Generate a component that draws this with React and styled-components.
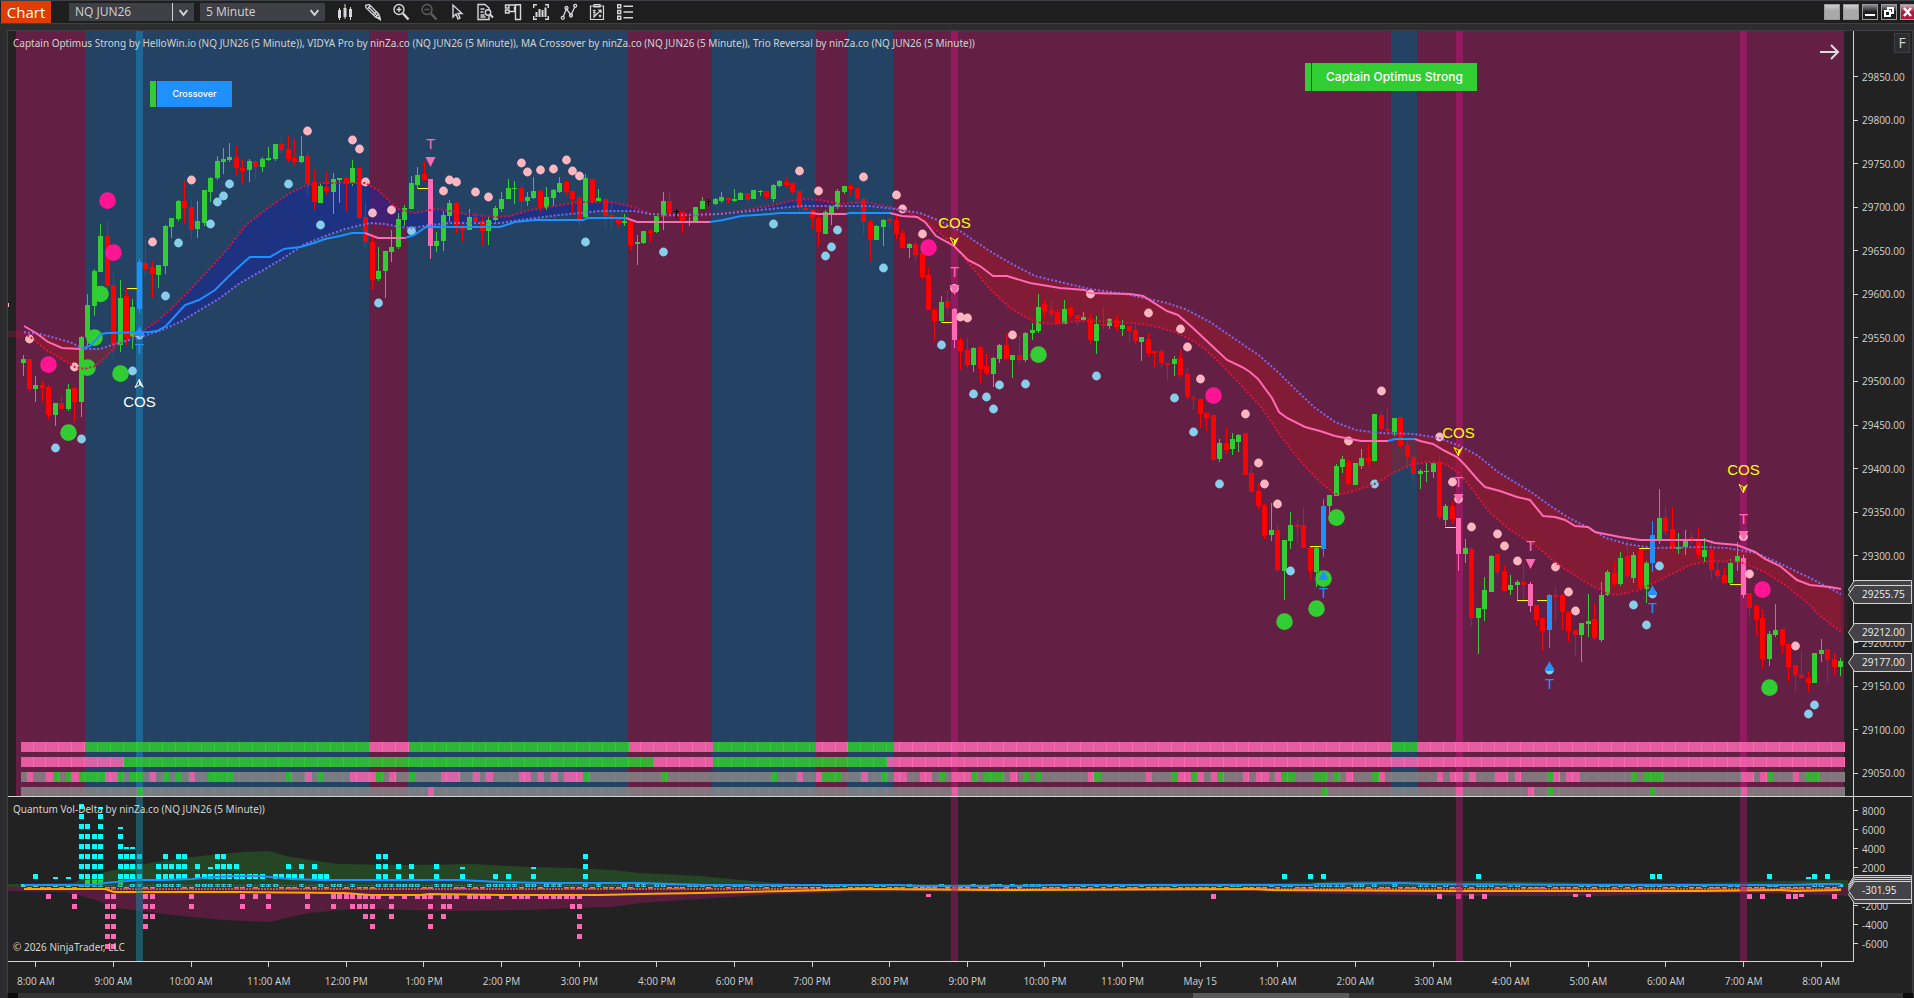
import React from "react";
import styled, { createGlobalStyle } from "styled-components";

const GlobalStyle = createGlobalStyle`
  * { box-sizing: border-box; }
  body { margin: 0; background: #2d2d30; overflow: hidden; }
`;

const FONT = `"Open Sans", "Noto Sans", sans-serif`;

/* ---------- data ---------- */

// One bar per five minutes. Each block lists its bars as
// colour + high,bodyTop,bodyBottom,low in thirds of a unit below `top`.
const BLOCKS = [
  {
    first: 0, top: 120,
    bars: `g705,717,728,768 r717,717,807,819 g768,795,807,846 r783,795,804,846 r795,801,885,897 g849,849,885,918 r825,849,867,867
g792,807,867,873 r801,804,846,906 g648,651,846,891 g522,555,651,678 g447,453,558,588 g312,348,456,456 r303,348,498,510 r459,495,675,714
g480,534,675,696 r505,528,651,675 g537,561,651,687 B417,426,567,579 r348,429,447,468 r426,441,462,534 g435,435,465,504 g315,318,438,462
g294,294,321,354 g240,243,297,303 r183,243,264,309 r240,261,330,357 g243,303,327,354 g210,210,309,318 g171,174,216,246 g108,123,174,180
g84,117,126,162 g69,111,121,126 r78,111,144,165 r117,144,153,189 g117,123,150,186 r120,123,141,177 g111,117,141,156 g81,114,120,123
g72,72,117,123 r54,72,90,102 r48,87,117,126 r57,114,126,138 g48,108,126,129 r93,108,192,225 r150,186,246,270 g192,198,249,249
r153,201,213,225 g159,177,216,282 g174,174,180,249 r171,174,189,273 g120,144,189,198 r144,144,294,297 r246,291,366,387 r339,366,480,507
g381,453,477,483 g393,393,453,534 g330,381,396,426 g279,297,381,387 g255,264,300,318 g168,189,267,267 g141,165,195,207 r126,162,180,183
P177,177,378,417 g336,363,378,396 g273,285,363,393 g240,249,288,306 r246,249,318,339 r303,318,330,366 g267,291,330,330 r276,291,306,327`,
    dots: `p1:657 p8:741 p20:366 p26:180 p44:33 p51:60 p52:87 p53:186 p54:279 p57:270 p65:213 p66:180 p67:186 p70:216
b5:984 b9:957 b17:753 b18:645 b22:528 b24:369 b29:312 b30:246 b31:228 b32:192 b41:192 b46:315 b55:549 b60:333
G7:938 G10:743 G11:653 G12:522 G15:761 M4:734 M13:242 M14:398`,
  },
  {
    first: 71, top: 120,
    bars: `r291,303,333,378 g291,300,333,375 g258,264,300,303 g216,237,267,276 g177,204,237,237 g183,204,207,252 r189,204,246,279
g216,231,243,258 g171,213,234,237 r210,213,264,273 g201,231,264,270 g207,210,234,258 g171,189,216,219 r180,186,216,228 r213,213,237,279
r228,234,297,318 g162,174,291,300 r177,177,246,252 g207,234,243,243 r234,237,288,321 r252,285,291,330 r291,294,309,321 g282,303,309,318
r300,303,375,393 g345,366,372,435 g333,333,369,372 r327,333,339,363 g288,288,336,339 g216,243,288,330 r216,243,279,288 k267,273,276,294
r276,276,303,339 g291,303,306,318 g261,261,303,303 g231,243,267,267 k237,244,247,258 g234,237,252,255 g216,231,243,249 r231,234,240,249
g207,237,243,246 g216,219,240,240 r216,219,240,246 g210,210,237,237 g210,213,216,228 r213,213,231,240 g192,195,237,246 g180,183,198,201
r174,186,195,201 r189,189,216,222 r213,213,264,276 r249,264,270,276 r270,270,294,327 r273,294,336,378 g270,276,342,342 g258,258,279,315
g207,213,261,267 g198,198,216,222 r192,198,207,225 r204,204,237,252 r231,237,306,342 r297,306,360,426 g315,318,360,360 g297,300,321,378
r294,297,303,327 r288,300,342,357 r327,339,384,387 g369,372,384,414 r363,372,405,423`,
    dots: `p72:231 p77:129 p78:156 p80:150 p82:147 p84:120 p85:153 p86:168 p120:153 p123:213 p130:171 p135:225 p136:267
b87:366 b99:396 b116:312 b124:408 b125:381 b126:330 b133:444`,
  },
  {
    first: 139, top: 160,
    bars: `r279,279,351,357 r324,345,450,450 r444,450,483,543 g408,426,483,489 r390,423,444,462 P444,447,540,564 r531,540,573,630
r534,570,615,624 g561,564,615,636 r558,561,627,669 r579,618,639,645 g591,594,642,681 g552,555,597,609 r519,555,597,600 g585,585,600,654
r528,585,600,612 g516,519,600,606 g489,510,519,540 g402,441,513,519 r420,432,453,474 r423,450,462,471 r447,456,492,498 g420,447,492,492
r438,444,465,477 r465,465,477,498 g456,471,480,486 r462,477,540,552 g468,492,543,582 r441,492,498,507 g474,477,498,507 r468,480,501,513
g480,495,507,528 r498,498,513,549 r498,510,543,552 g531,531,546,603 r519,537,579,591 r573,573,579,624 r567,573,609,624 r609,609,615,663
g588,597,612,648 r567,594,645,654 r621,642,711,720 r705,714,717,750 r717,717,762,804 r756,759,774,813 r765,765,900,903 g837,849,897,906
r804,849,870,882 g819,837,867,885 g822,825,846,876 r819,819,945,945 r915,939,996,999 r969,993,1038,1050 r1032,1035,1128,1137
g1029,1110,1125,1143 r1092,1110,1230,1236 g1140,1140,1233,1320 g1056,1095,1143,1167 r1077,1095,1101,1149 r1041,1095,1164,1164
r1161,1161,1233,1260 g1161,1164,1236,1281 B1017,1038,1167,1191 g1005,1005,1038,1062 g912,918,1008,1008`,
    dots: `p139:222 p144:385 p145:471 p146:474 p153:525 p165:402 p174:459 p179:507 p180:561 p182:657 p189:762 p191:909 p192:972 p194:1032
b142:555 b147:702 b149:711 b150:747 b151:675 b155:672 b166:648 b178:714 b181:816 b185:972 b196:1233
G157:584 G195:1385 G200:1346 G201:1256 G203:1073 M140:263 M184:707`,
  },
  {
    first: 204, top: 360,
    bars: `g288,297,321,339 r297,303,372,378 g309,309,375,375 g267,294,318,327 r252,294,303,318 g162,162,303,306 r153,165,207,222
r144,207,213,219 g174,174,216,228 r171,171,258,261 r243,255,291,327 r285,291,342,366 g327,333,342,387 g309,333,336,366 g303,309,336,354
r291,306,471,480 g432,438,480,498 r426,438,477,492 P474,474,582,633 g537,564,582,609 r561,567,774,798 g744,744,774,882 g651,690,747,783
g585,588,696,696 r582,582,636,645 r618,633,693,693 g645,675,690,705 g660,666,675,720 r612,666,675,720 P666,672,738,756 r735,735,780,798
r774,774,813,873 B702,705,810,864 r681,705,711,786 r702,705,756,810 r756,756,813,843 r810,810,825,888 g789,789,825,906 g702,783,792,831
r729,777,834,840 g666,705,840,846 g630,636,705,708 r606,639,672,681 g576,594,672,678 r540,588,648,654 g576,585,654,669 r567,570,684,690
g603,609,687,729 B483,525,609,636 g387,474,540,552 r438,471,513,525 r441,507,567,567 g519,561,567,582 g510,540,561,585 r516,531,540,552
r504,540,585,597 g534,570,591,606 r540,570,630,657 r603,630,648,657 r624,645,669,672 g597,609,669,672 g546,588,606,633 P585,594,705,714
r699,699,744,771 r732,738,780,828 r750,774,897,927 g813,822,897,918 g732,810,825,831 r807,807,855,879 r849,852,921,963 r915,915,945,996
r870,945,954,954 r936,954,969,996 g879,879,969,969 g837,870,882,906 r867,867,900,969 r879,897,921,948 g894,903,921,948`,
    dots: `p205:243 p210:93 p219:231 p221:366 p222:417 p224:501 p228:522 p229:558 p231:603 p237:621 p239:696 p240:753 p266:530 p267:642 p274:858
b209:372 b249:735 b251:795 b252:702 b253:618 b236:930 b276:1062 b277:1035 G270:983 M269:689`,
  },
];

const BAR_COLORS = { g: "#32cd32", r: "#ff0000", B: "#1e90ff", P: "#ff69b4", k: "#000000" };
const DOT_COLORS = { p: "#ffb6c1", b: "#87ceeb", G: "#32cd32", M: "#ff1493" };
const barX = (i) => Math.floor(23 + 6.468 * i);

const BARS = BLOCKS.flatMap(({ first, top, bars }) =>
  bars.split(/\s+/).map((token, n) => {
    const [high, bodyTop, bodyBottom, low] = token.slice(1).split(",").map((v) => Math.round(top + v / 3));
    return { x: barX(first + n), kind: token[0], high, bodyTop, bodyBottom, low };
  })
);

const DOTS = BLOCKS.flatMap(({ top, dots }) =>
  dots.split(/\s+/).map((token) => {
    const [i, y] = token.slice(1).split(":").map(Number);
    return { x: barX(i) + 0.5, y: top + y / 3, kind: token[0], r: /[GM]/.test(token[0]) ? 8.3 : 4.4 };
  })
);

const points = (text) => text.trim().split(/\s+/).map((p) => p.split(",").map(Number));

const SLOW = points(`24,332 40,334 70,342 85,349 100,349 115,344 140,337 162,330 182,321 200,310 220,298 240,283 265,269 285,257
305,244 325,236 345,229 370,223 385,224 400,227 412,228 430,225 450,223 500,223 520,220 560,215 590,212 600,211 635,211 650,214
680,215 720,214 750,211 780,208 800,206 840,206 870,206 895,209 920,213 940,221 960,231 988,250 1010,263 1035,276 1060,282
1090,289 1125,294 1167,303 1185,309 1210,322 1235,339 1260,356 1280,374 1293,387 1314,407 1335,422 1356,430 1381,433 1414,434
1439,438 1460,446 1477,455 1498,472 1531,492 1552,507 1569,518 1589,528 1606,538 1627,544 1652,548 1702,547 1727,548 1756,553
1777,562 1810,578 1841,594`);

const FAST = points(`24,333 33,339 45,349 60,358 75,367 85,369 95,366 105,358 115,347 125,340 140,333 155,323 170,310 185,295
205,274 225,252 245,226 265,210 290,193 305,186 320,183 365,183 378,190 392,204 400,210 415,213 435,209 450,211 465,214 495,217
510,216 530,210 555,206 580,202 610,202 630,206 645,212 660,216 710,215 740,211 770,206 790,201 805,199 820,200 840,204 865,202
890,207 910,213 925,222 940,233 958,250 975,271 990,289 1010,308 1035,322 1050,324 1080,321 1120,322 1150,325 1175,332 1197,343
1215,358 1240,384 1262,408 1280,435 1300,461 1320,482 1335,494 1343,494 1373,485 1393,473 1410,465 1427,462 1443,463 1458,472
1473,490 1489,512 1510,530 1535,545 1556,563 1585,582 1606,593 1617,595 1639,590 1660,580 1690,565 1710,561 1740,562 1765,572
1785,585 1810,605 1819,615 1841,632`);

const VIDYA = [
  ["#ff69b4", "24,326 36,333 48,342 62,348 81,349"],
  ["#1e90ff", "81,349 90,346 101,334 108,333 149,332 157,331 166,326 185,305 199,300 215,290 228,277 243,263 250,257 270,257 284,249 300,247 314,243 325,239 340,236 352,233 365,233"],
  ["#ff69b4", "365,233 378,238 405,238"],
  ["#1e90ff", "405,238 414,235 426,227 500,227 515,222 535,220 583,220 588,218 626,218"],
  ["#ff69b4", "626,218 637,222 710,222"],
  ["#1e90ff", "710,222 723,220 741,216 770,214 780,213 812,213"],
  ["#ff69b4", "812,213 818,214 846,214"],
  ["#1e90ff", "846,214 850,213 890,213"],
  ["#ff69b4", "890,213 902,216 917,217 925,222 936,236 954,246 968,260 980,266 993,276 1007,276 1030,283 1060,288 1085,290 1090,293 1130,294 1143,296 1167,311 1178,315 1193,328 1210,344 1227,360 1242,367 1250,372 1258,379 1272,398 1279,412 1287,418 1305,427 1320,431 1335,436 1361,441 1388,441"],
  ["#1e90ff", "1388,441 1395,439 1415,439"],
  ["#ff69b4", "1415,439 1420,441 1433,444 1445,451 1457,457 1465,465 1478,480 1485,487 1500,491 1517,497 1530,500 1543,516 1555,517 1565,520 1575,526 1588,527 1595,532 1620,537 1640,540 1705,540 1715,543 1737,545 1755,552 1765,559 1780,566 1797,580 1810,585 1830,587 1841,589"],
];

const valueAt = (line, x) => {
  const n = line.findIndex((p) => p[0] >= x);
  if (n <= 0) return line[0][1];
  const [x0, y0] = line[n - 1];
  const [x1, y1] = line[n];
  return y0 + ((y1 - y0) * (x - x0)) / (x1 - x0);
};

// Splits the space between the two averages at every crossing.
const CLOUDS = (() => {
  const out = [];
  let run = null;
  for (let x = 24; x <= 1841; x += 1) {
    const slow = valueAt(SLOW, x);
    const fast = valueAt(FAST, x);
    const up = fast < slow;
    if (!run || run.up !== up) {
      run = { up, a: [], b: [] };
      out.push(run);
    }
    run.a.push(`${x},${slow.toFixed(1)}`);
    run.b.unshift(`${x},${fast.toFixed(1)}`);
  }
  return out;
})();

const TREND_BANDS = [[85, 369], [408, 628], [712, 816], [848, 893], [1391, 1417]];
const SIGNAL_BARS = [[136, "up"], [951, "down"], [1456, "down"], [1740, "down"]];

const STRIPS = [
  { y: 742, h: 10, cells: "p21-85 g85-369 p369-409 g409-629 p629-713 g713-816 p816-848 g848-894 p894-1392 g1392-1418 p1418-1845" },
  { y: 757, h: 10, cells: "p21-124 g124-654 p654-713 g713-887 p887-1845" },
  {
    y: 772, h: 10, rest: true,
    cells: `p27-33 p46-53 g53-60 g66-72 p72-79 g79-105 p105-118 g118-124 g130-143 p150-156 g163-169 g176-182 p189-195 g208-234
g286-292 p305-312 g318-324 p350-376 g376-383 p389-396 g409-415 p441-460 p473-480 p486-493 p519-531 p538-544 p551-558 p564-583
g583-590 g661-667 g771-777 p797-803 p816-822 g822-842 p861-868 g881-887 p894-907 p920-932 g939-945 p952-971 g971-978 g984-1004
p1010-1017 g1023-1029 g1036-1042 p1088-1094 g1094-1101 p1146-1152 g1172-1178 p1178-1191 g1191-1198 p1198-1204 p1211-1217
g1217-1224 p1243-1249 p1256-1269 p1275-1281 g1282-1295 g1314-1327 g1333-1340 p1346-1353 g1372-1379 p1379-1385 p1437-1443
p1450-1463 p1469-1476 p1495-1508 p1515-1521 g1547-1553 p1553-1560 p1566-1580 g1631-1637 g1643-1663 p1741-1754 p1760-1767
g1767-1773 p1793-1799 g1806-1819`,
  },
  { y: 787, h: 9, rest: true, cells: "g137-143 p428-434 p952-958 g1321-1327 p1456-1463 p1528-1534 g1547-1553 g1650-1656 p1741-1747" },
];
const STRIP_COLORS = { p: "#ff69b4", g: "#32cd32", x: "#888888" };

const fillGaps = (cells) => {
  const out = [];
  let x = 21;
  cells.forEach((c) => {
    if (c.from > x) out.push({ kind: "x", from: x, to: c.from });
    out.push(c);
    x = c.to;
  });
  if (x < 1845) out.push({ kind: "x", from: x, to: 1845 });
  return out;
};

const T_SIGNALS = [
  { i: 63, dir: "down", letter: 149, tri: 157 },
  { i: 144, dir: "down", letter: 277, tri: 285 },
  { i: 222, dir: "down", letter: 487, tri: 494 },
  { i: 233, dir: "down", letter: 551, tri: 559 },
  { i: 266, dir: "down", letter: 524, tri: 531 },
  { i: 18, dir: "up", letter: 354, tri: 326 },
  { i: 201, dir: "up", letter: 598, tri: 570 },
  { i: 236, dir: "up", letter: 689, tri: 661 },
  { i: 252, dir: "up", letter: 613, tri: 585 },
];

const COS_SIGNALS = [
  { i: 18, text: 407, arrow: 379, up: true },
  { i: 144, text: 228, arrow: 237 },
  { i: 222, text: 438, arrow: 447 },
  { i: 266, text: 475, arrow: 484 },
];

const STOP_LINES = [[126, 288], [417, 188], [942, 322], [1310, 546], [1445, 527], [1517, 600], [1537, 600], [1639, 548], [1730, 584]];

const VOLUME_UP = `2:874 5:877 7:877 9:804 10:824 11:834 12:807 15:827 16:847 17:847 18:854 21:864 22:854 23:864 24:854 25:854 27:864
28:874 29:867 30:854 31:854 32:864 33:864 34:874 35:874 36:874 37:874 39:874 40:874 41:864 42:874 43:864 45:864 46:874 47:874
55:854 56:854 58:864 60:864 64:864 68:867 73:874 75:874 79:867 87:854 195:874 199:874 201:874 225:874 252:874 253:874 270:874
276:877 277:874 279:874`;
const VOLUME_DOWN = `4:899 8:909 13:949 14:949 19:929 20:919 26:909 34:909 36:899 38:909 44:909 48:909 49:899 50:899 51:909 52:909
53:919 54:929 55:899 57:919 59:899 61:899 62:899 63:929 65:919 66:909 67:899 69:899 70:899 71:899 72:899 74:899 76:899 77:899
78:899 80:899 81:899 82:899 83:899 84:899 85:909 86:939 88:896 140:897 184:899 219:899 222:899 224:899 226:899 240:897 242:897 267:899
269:899 273:899 274:899 275:897 280:899`;
const pairs = (text) => text.split(/\s+/).map((t) => t.split(":").map(Number));

const PRICES = Array.from({ length: 17 }, (_, n) => (29850 - n * 50).toFixed(2));
const VOLUMES = ["8000", "6000", "4000", "2000", "0", "-2000", "-4000", "-6000"];
const TIMES = [
  "8:00 AM", "9:00 AM", "10:00 AM", "11:00 AM", "12:00 PM", "1:00 PM", "2:00 PM", "3:00 PM", "4:00 PM", "6:00 PM", "7:00 PM", "8:00 PM",
  "9:00 PM", "10:00 PM", "11:00 PM", "May 15", "1:00 AM", "2:00 AM", "3:00 AM", "4:00 AM", "5:00 AM", "6:00 AM", "7:00 AM", "8:00 AM",
];

/* ---------- layout ---------- */

const Window = styled.div`
  display: flex;
  flex-direction: column;
  height: 100vh;
  background: #2d2d30;
  color: #d3d3d3;
  font: 10px/14px ${FONT};
`;

const Toolbar = styled.header`
  display: flex;
  align-items: center;
  flex: none;
  height: 24px;
  padding-left: 1px;
  background: #1e1e1e;
  border-top: 1px solid #3f3f46;
  border-bottom: 1px solid #3f3f46;
`;

const AppTag = styled.h1`
  margin: 0 18px 0 0;
  width: 50px;
  font: 15px/22px ${FONT};
  text-align: center;
  color: #fff;
  background: #e03c00;
`;

const Picker = styled.label`
  position: relative;
  width: 125px;
  height: 18px;
  margin-right: 6px;
  select {
    width: 100%;
    height: 100%;
    padding: 0 0 0 6px;
    border: 0;
    border-radius: 0;
    appearance: none;
    font: 12px/18px ${FONT};
    color: #d3d3d3;
    background: #3f3f46;
  }
  svg {
    position: absolute;
    top: 0;
    right: 0;
    pointer-events: none;
    border-left: 1px solid ${(p) => (p.$split ? "#d3d3d3" : "transparent")};
  }
`;

const Tools = styled.nav`
  display: flex;
  gap: 8px;
  margin-left: 4px;
`;

const ToolButton = styled.button`
  width: 20px;
  height: 18px;
  padding: 0 2px;
  border: 0;
  background: none;
  color: #d6d6dc;
  opacity: ${(p) => (p.disabled ? 0.35 : 1)};
  svg { display: block; overflow: visible; }
`;

const WindowButtons = styled.div`
  display: flex;
  gap: 3px;
  margin-left: auto;
  margin-right: -2px;
`;

const WindowButton = styled.button`
  width: 16px;
  height: 16px;
  padding: 0;
  border: 1px solid #9a9a9a;
  color: #fff;
  background: ${(p) =>
    p.$tone === "close"
      ? "linear-gradient(#d9a0b0, #b01840 50%, #b01840)"
      : p.$tone === "dark"
      ? "linear-gradient(#8a8a92, #1c1c20 50%, #1c1c20)"
      : "linear-gradient(#cfcfcf, #a9a9a9 40%, #a9a9a9)"};
  svg { display: block; }
`;

const ChartFrame = styled.main`
  display: grid;
  flex: 1;
  min-height: 0;
  grid-template-columns: minmax(0, 1fr) 58px;
  grid-template-rows: minmax(0, 766fr) minmax(0, 165fr) 31px;
  margin: 6px 1px 0 7px;
  border: 1px solid #3f3f46;
  border-bottom: 0;
  background: #222222;
`;

const Pane = styled.section`
  position: relative;
  border-right: 1px solid #d3d3d3;
  border-bottom: 1px solid #d3d3d3;
  > svg { display: block; width: 100%; height: 100%; }
`;

const PaneLabel = styled.p`
  position: absolute;
  left: 5px;
  ${(p) => (p.$bottom ? "bottom: 7px;" : "top: 5px;")}
  margin: 0;
  font: 10px/14px "Noto Sans", ${FONT};
  white-space: nowrap;
`;

const Axis = styled.div`
  position: relative;
  display: flex;
  flex-direction: column;
  padding: ${(p) => (p.$volume ? "4px 0 8px" : "24px 0 1px")};
  border-bottom: 1px solid ${(p) => (p.$volume ? "transparent" : "#d3d3d3")};
`;

const AxisRow = styled.div`
  display: flex;
  flex: 1;
  align-items: center;
  gap: 4px;
  min-height: 0;
  &::before { content: ""; width: 4px; height: 1px; background: #d3d3d3; }
`;

const FButton = styled.button`
  position: absolute;
  top: 2px;
  right: 2px;
  width: 16px;
  height: 20px;
  padding: 0;
  border: 1px solid #3f3f46;
  background: #2d2d30;
  color: #d3d3d3;
  font: 14px/18px ${FONT};
`;

const PriceTag = styled.output`
  position: absolute;
  left: -6px;
  top: ${(p) => p.$top}px;
  width: 64px;
  height: 19px;
  padding-left: 14px;
  font: 10px/19px ${FONT};
  color: #f0f0f0;
  svg { position: absolute; left: 0; top: -8px; }
  span { position: relative; }
`;

const TimeAxis = styled.div`
  display: flex;
  grid-column: 1 / -1;
  margin: 0 52px 0 -11px;
`;

const TimeLabel = styled.time`
  display: flex;
  flex: 1;
  flex-direction: column;
  align-items: center;
  gap: 7px;
  white-space: nowrap;
  &::before { content: ""; width: 1px; height: 5px; background: #d3d3d3; }
`;

const ScrollTrack = styled.div`
  display: flex;
  flex: none;
  height: 5px;
  margin: 0 1px 0 8px;
  background: #333333;
`;

const ScrollPart = styled.div`
  flex: ${(p) => p.$size};
  background: ${(p) => p.$color || "transparent"};
`;

const ChartAction = styled.button`
  position: absolute;
  top: ${(p) => p.$top}px;
  left: ${(p) => p.$left};
  display: flex;
  gap: 1px;
  padding: 0;
  border: 0;
  background: none;
  color: #fff;
  font: ${(p) => (p.$large ? "500 12px/28px" : "500 9px/26px")} Inter, sans-serif;
  &::before { content: ""; width: 6px; background: #32cd32; }
  span { width: ${(p) => (p.$large ? 165 : 75)}px; background: ${(p) => (p.$large ? "#32cd32" : "#1e90ff")}; }
`;

const GoLatest = styled.button`
  position: absolute;
  top: 13px;
  right: 13px;
  padding: 0;
  border: 0;
  background: none;
  color: #dcdcdc;
  svg { display: block; }
`;

/* ---------- drawings ---------- */

const ICONS = [
  ["Bar type", <g fill="currentColor" key="a"><path d="M1 6h3v8H1zM6.500 4h3v9h-3zM12 5h3v8h-3z" /><path d="M2 4h1v12H2zM7.500 0h1v15h-1zM13 3h1v13h-1z" /></g>],
  ["Drawing tools", <g key="b" fill="none" stroke="currentColor" strokeWidth="1.300"><path d="M.7 1.200 4.500.6l9.300 9.600-3.200 3L1 3.800zM3 4.200l2.500-2.500M3.300 2.800l9 9.200M8.500 10.600l3-2.800M10.800 13.200l4.400 2.200-1.400-5" /><path d="M13 13.800l2.200 1.600-.6-2.600z" fill="currentColor" /></g>],
  ["Zoom in", <g key="c" fill="none" stroke="currentColor" strokeWidth="1.400"><circle cx="6" cy="5.500" r="5" /><path d="M6 3v5M3.500 5.500h5" /><path d="M10 9.500l5.500 6" strokeWidth="2.500" /></g>],
  ["Zoom out", <g key="d" fill="none" stroke="currentColor" strokeWidth="1.400"><circle cx="6" cy="5.500" r="5" /><path d="M3.500 5.500h5" /><path d="M10 9.500l5.500 6" strokeWidth="2.500" /></g>],
  ["Cursor", <path key="e" d="M4 1v12l3-3 2 5 2-1-2-4.500h4z" fill="none" stroke="currentColor" strokeWidth="1.400" />],
  ["Data box", <g key="f" fill="none" stroke="currentColor" strokeWidth="1.400"><path d="M12 12v3.500H1V.5h7L12 4v2M3.500 5h4M3.500 8h3M3.500 11h4M3.500 13h5" /><circle cx="11" cy="8.500" r="2.700" /><path d="M13 10.500l3 3" strokeWidth="2" /></g>],
  ["Chart trader", <g key="g" fill="none" stroke="currentColor" strokeWidth="1.400"><path d="M.5 1h3.500v3H.5zM.5 6h3.500v3H.5zM4 1h7M4 7.500h5.500V2.500M10.500.7h5v14.800h-5z" /></g>],
  ["Indicators", <g key="h" fill="none" stroke="currentColor" strokeWidth="1.400"><path d="M.7 4V.7H4M12 .7h3.300V4M15.300 12v3.300H12M4 15.300H.7V12" /><path d="M3.500 8v5M6.500 5v8M9.500 6v7M12.500 3.500V13" strokeWidth="2" /></g>],
  ["Strategies", <g key="i" fill="none" stroke="currentColor" strokeWidth="1.300"><path d="M2 13 5.500 5l4.500 6 4-8.500" /><circle cx="1.800" cy="13.800" r="1.500" /><circle cx="5.500" cy="4" r="1.500" /><circle cx="10" cy="11.500" r="1.500" /><circle cx="14.200" cy="1.800" r="1.500" /></g>],
  ["Performance", <g key="j" fill="none" stroke="currentColor" strokeWidth="1.200"><path d="M1.500 2h13v13.500h-13zM5 2V.5h6V3H5zM4 6l2.500 2.500M6.500 6 4 8.500M9 6h3v3M12 6 5 13v-3h2.500M10 11l2 2M12 11l-2 2" /></g>],
  ["Properties", <g key="k" fill="none" stroke="currentColor" strokeWidth="1.400"><path d="M.7.7h3v3h-3zM.7 6.500h3v3h-3zM.7 12.300h3v3h-3zM6.500 2.200H16M6.500 8H16M6.500 13.800H16" /></g>],
];

const Chevron = () => (
  <svg width="22" height="18" viewBox="0 0 22 18" fill="none" stroke="#d3d3d3" strokeWidth="2" aria-hidden="true">
    <path d="M7 7l4 5 4-5" />
  </svg>
);

const toPolyline = (line) => line.map((p) => p.join(",")).join(" ");

const Strip = ({ y, h, cells, rest }) => {
  const parsed = cells.split(/\s+/).map((c) => {
    const [from, to] = c.slice(1).split("-").map(Number);
    return { kind: c[0], from, to };
  });
  const all = rest ? fillGaps(parsed) : parsed;
  return (
    <g shapeRendering="crispEdges">
      {all.map((c) => (
        <g key={c.from} fill={STRIP_COLORS[c.kind]}>
          <rect x={c.from} y={y} width={c.to - c.from} height={h} opacity="0.83" />
          {Array.from({ length: 141 }, (_, n) => 33 + Math.floor(n * 12.936))
            .filter((x) => x > c.from && x < c.to)
            .map((x) => <rect key={x} x={x} y={y} width="1" height={h} opacity={c.kind === "x" ? 0.5 : 1} />)}
        </g>
      ))}
    </g>
  );
};

const PriceChart = () => (
  <svg viewBox="8 31 1845 765" preserveAspectRatio="none" role="img" aria-label="NQ JUN26 five minute price chart">
    <g shapeRendering="crispEdges">
      <rect x="16" y="31" width="1828" height="765" fill="#641f44" />
      {TREND_BANDS.map(([from, to]) => <rect key={from} x={from} y="31" width={to - from} height="765" fill="#234264" />)}
      {SIGNAL_BARS.map(([x, dir]) => <rect key={x} x={x} y="31" width="7" height="765" fill={dir === "up" ? "#1e6694" : "#911b5e"} />)}
      <rect x="8" y="331" width="8" height="6" fill="#4a1e2c" />
      <rect x="16" y="331" width="8" height="6" fill="#821b35" />
      <rect x="8" y="303" width="1" height="4" fill="#ffb6c1" />
      <rect x="1844" y="595" width="4" height="37" fill="#361d28" />
    </g>
    {CLOUDS.map((c, n) => (
      <polygon key={n} points={[...c.a, ...c.b].join(" ")} fill={c.up ? "#1922a0" : "#a01726"} opacity="0.5" />
    ))}
    {STRIPS.map((s) => <Strip key={s.y} {...s} />)}
    <g shapeRendering="crispEdges">
      {STOP_LINES.map(([x, y]) => <rect key={x} x={x} y={y} width="11" height="1" fill="#ffff00" />)}
      {BARS.map((b) => (
        <g key={b.x} fill={BAR_COLORS[b.kind]}>
          <rect x={b.x} y={b.high} width="1" height={Math.max(1, b.low - b.high)} />
          <rect x={b.x - 2} y={b.bodyTop} width="5" height={Math.max(1, b.bodyBottom - b.bodyTop)} />
        </g>
      ))}
    </g>
    {DOTS.map((d) => <circle key={`${d.x}${d.kind}`} cx={d.x} cy={d.y} r={d.r} fill={DOT_COLORS[d.kind]} />)}
    <g fill="none" strokeWidth="2">
      <polyline points={toPolyline(FAST)} stroke="#dc143c" strokeDasharray="2 2" />
      <polyline points={toPolyline(SLOW)} stroke="#7b68ee" strokeDasharray="2 2" />
      {VIDYA.map(([color, line]) => <polyline key={line} points={line} stroke={color} />)}
    </g>
    {T_SIGNALS.map(({ i, dir, letter, tri }) => {
      const x = barX(i) + 0.5;
      const color = dir === "up" ? "#1e90ff" : "#ff69b4";
      return (
        <g key={i} fill={color}>
          <text x={x} y={letter} textAnchor="middle" fontFamily="Liberation Sans, sans-serif" fontSize="15">T</text>
          <path d={dir === "up" ? `M${x - 5} ${tri + 10}h10l-5-10z` : `M${x - 5} ${tri}h10l-5 10z`} />
        </g>
      );
    })}
    {COS_SIGNALS.map(({ i, text, arrow, up }) => {
      const x = barX(i) + 0.5;
      const color = up ? "#ffffff" : "#ffff00";
      return (
        <g key={i} fill={color}>
          <text x={x} y={text} textAnchor="middle" fontFamily="Liberation Sans, sans-serif" fontSize="15">COS</text>
          <g transform={up ? `translate(${x} ${arrow + 9}) scale(1 -1)` : `translate(${x} ${arrow})`}>
            <path d="M0 9 4.500 0 0 3z" />
            <path d="M0 9-4.500.5 0 3z" fill="none" stroke={color} />
          </g>
        </g>
      );
    })}
  </svg>
);

const VolumeColumn = ({ x, edge, up }) => {
  const cells = [];
  if (up) {
    for (let y = 874; y > edge - 10; y -= 10) cells.push([Math.max(y, edge), y + 5]);
  } else {
    for (let y = 894; y < edge; y += 10) cells.push([y, Math.min(y + 5, edge)]);
  }
  return cells.filter(([a, b]) => b > a).map(([a, b]) => <rect key={a} x={x - 2} y={a} width="5" height={b - a} />);
};

const isUpBar = (b) => b.kind === "g" || b.kind === "B";

const VolumeChart = () => (
  <svg viewBox="8 797 1845 164" preserveAspectRatio="none" role="img" aria-label="Volume delta histogram">
    <polygon fill="#254525" points="8,884 73,883 82,879 98,874 114,870 139,865 163,861 192,857 220,854 245,852 269,851 286,856 310,860 339,864 408,865 473,864 531,867 571,868 612,870 640,873 700,876 763,882 800,884 1050,884 1274,883 1360,881 1500,881 1600,883 1700,883 1780,881 1848,880 1848,887 8,887" />
    <polygon fill="#571d3c" points="8,891 65,892 82,896 98,901 118,908 140,911 163,914 192,917 225,920 269,922 286,918 310,913 339,910 367,909 408,910 450,911 531,910 571,908 612,907 640,903 700,899 763,895 850,892 1250,891 1340,894 1460,896 1600,896 1700,893 1760,893 1848,896 1848,887 8,887" />
    <g shapeRendering="crispEdges">
      {BARS.map((b) => (
        <rect
          key={b.x}
          x={b.x - 2}
          y={isUpBar(b) ? 884 : 887}
          width="5"
          height={isUpBar(b) ? 3 : 2}
          fill={isUpBar(b) ? "#22d8e8" : "#ff69b4"}
        />
      ))}
      <g fill="#00ffff">{pairs(VOLUME_UP).map(([i, y]) => <VolumeColumn key={i} x={barX(i)} edge={y} up />)}</g>
      <g fill="#ff69b4">{pairs(VOLUME_DOWN).map(([i, y]) => <VolumeColumn key={i} x={barX(i)} edge={y} />)}</g>
      {[10, 11, 12, 15].map((i) => <rect key={i} x={barX(i) - 2} y="880" width="5" height="6" fill="#32cd32" />)}
    </g>
    <g fill="none">
      <path d="M80 885.500H1841" stroke="#1565a8" strokeDasharray="2 1" strokeWidth="1.500" />
      <path d="M24 889H1841" stroke="#b5651d" strokeDasharray="2 1" strokeWidth="2" />
      <polyline stroke="#1e90ff" strokeWidth="2" points="24,885 90,885 105,883 139,880 163,880 192,879 214,877 240,876 260,876 290,879 320,880 460,880 500,882 545,883 640,883 705,885 900,885 920,886 1020,886 1050,885 1310,885 1318,884 1400,883 1430,884 1600,885 1790,885 1820,884 1841,884" />
      <polyline stroke="#ffa500" strokeWidth="2" points="24,889 105,889 114,892 240,892 345,893 370,895 420,895 430,894 500,895 600,895 640,894 700,893 790,891 860,889 1000,890 1250,889 1274,890 1450,891 1700,891 1780,890 1795,891 1841,890" />
    </g>
    <g shapeRendering="crispEdges">
      {SIGNAL_BARS.map(([x, dir]) => (
        <rect key={x} x={x} y="797" width="7" height="164" fill={dir === "up" ? "#1a89a8" : "#a01966"} opacity="0.5" />
      ))}
    </g>
  </svg>
);

// `stack` holds the vertical shifts of further markers that peek out from behind.
const Tag = ({ top, children, stack = [] }) => (
  <PriceTag $top={top}>
    <svg width="64" height="35" viewBox="0 -8 64 35" fill="#424247" stroke="#d3d3d3" aria-hidden="true">
      {[...stack, 0].map((dy) => (
        <path key={dy} d={`M.5 ${9.5 + dy}l6-9h57v18h-57z`} />
      ))}
    </svg>
    <span>{children}</span>
  </PriceTag>
);

export default function App() {
  return (
    <>
      <GlobalStyle />
      <Window>
        <Toolbar>
          <AppTag>Chart</AppTag>
          <Picker $split>
            <select aria-label="Instrument" defaultValue="NQ JUN26"><option>NQ JUN26</option></select>
            <Chevron />
          </Picker>
          <Picker>
            <select aria-label="Interval" defaultValue="5 Minute"><option>5 Minute</option></select>
            <Chevron />
          </Picker>
          <Tools aria-label="Chart tools">
            {ICONS.map(([name, art]) => (
              <ToolButton key={name} aria-label={name} disabled={name === "Zoom out"}>
                <svg width="16" height="16" viewBox="0 0 16 16">{art}</svg>
              </ToolButton>
            ))}
          </Tools>
          <WindowButtons>
            <WindowButton aria-label="Link instrument" />
            <WindowButton aria-label="Link interval" />
            <WindowButton $tone="dark" aria-label="Minimize">
              <svg width="14" height="14"><path d="M2 10h10" stroke="#fff" strokeWidth="2" /></svg>
            </WindowButton>
            <WindowButton $tone="dark" aria-label="Restore">
              <svg width="14" height="14" fill="none" stroke="#fff" strokeWidth="2"><path d="M3 6h5v5H3zM6 5V3h5v5H9" /></svg>
            </WindowButton>
            <WindowButton $tone="close" aria-label="Close">
              <svg width="14" height="14" stroke="#fff" strokeWidth="2.500"><path d="M3 3l7 8M10 3l-7 8" /></svg>
            </WindowButton>
          </WindowButtons>
        </Toolbar>
        <ChartFrame>
          <Pane>
            <PriceChart />
            <PaneLabel>
              Captain Optimus Strong by HelloWin.io (NQ JUN26 (5 Minute)), VIDYA Pro by ninZa.co (NQ JUN26 (5 Minute)), MA Crossover by
              ninZa.co (NQ JUN26 (5 Minute)), Trio Reversal by ninZa.co (NQ JUN26 (5 Minute))
            </PaneLabel>
            <ChartAction $top={50} $left="142px"><span>Crossover</span></ChartAction>
            <ChartAction $large $top={32} $left="calc(100% - 548px)"><span>Captain Optimus Strong</span></ChartAction>
            <GoLatest aria-label="Go to latest bar">
              <svg width="20" height="16" fill="none" stroke="currentColor" strokeWidth="2"><path d="M0 8h18M11 1l7 7-7 7" /></svg>
            </GoLatest>
          </Pane>
          <Axis>
            {PRICES.map((p) => <AxisRow key={p}>{p}</AxisRow>)}
            <FButton aria-label="Fixed scale">F</FButton>
            <Tag top={554} stack={[-5]}>29255.75</Tag>
            <Tag top={592}>29212.00</Tag>
            <Tag top={622}>29177.00</Tag>
          </Axis>
          <Pane>
            <VolumeChart />
            <PaneLabel>Quantum Vol-Delta by ninZa.co (NQ JUN26 (5 Minute))</PaneLabel>
            <PaneLabel $bottom>© 2026 NinjaTrader, LLC</PaneLabel>
          </Pane>
          <Axis $volume>
            {VOLUMES.map((v) => <AxisRow key={v}>{v}</AxisRow>)}
            <Tag top={84} stack={[-6, -4, -2, 4]}>-301.95</Tag>
          </Axis>
          <TimeAxis>
            {TIMES.map((t, n) => <TimeLabel key={n}>{t}</TimeLabel>)}
          </TimeAxis>
        </ChartFrame>
        <ScrollTrack>
          <ScrollPart $size={10} $color="#0c0c0c" />
          <ScrollPart $size={1174} />
          <ScrollPart $size={156} $color="#5a5a5a" />
          <ScrollPart $size={554} />
          <ScrollPart $size={10} $color="#0c0c0c" />
        </ScrollTrack>
      </Window>
    </>
  );
}
